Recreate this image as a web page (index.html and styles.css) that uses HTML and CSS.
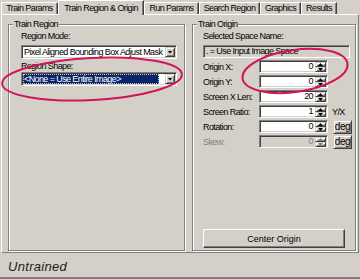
FILE: index.html
```html
<!DOCTYPE html>
<html lang="en">
<head>
    <meta charset="UTF-8">
    <title>Train Region &amp; Origin</title>
    <link rel="stylesheet" href="styles.css">
</head>
<body>
    <div class="dialog">
        <div class="tabs">
            <div class="tab tab-train">Train Params</div>
            <div class="tab tab-region active">Train Region &amp; Origin</div>
            <div class="tab tab-run">Run Params</div>
            <div class="tab tab-search">Search Region</div>
            <div class="tab tab-graphics">Graphics</div>
            <div class="tab tab-results">Results</div>
        </div>

        <div class="panel">
            <div class="group group-region">
                <div class="group-title">Train Region</div>
                <div class="group-body body-region">
                    <div class="label">Region Mode:</div>
                    <div class="combo sunken">
                        <div class="combo-text">Pixel Aligned Bounding Box Adjust Mask</div>
                        <div class="combo-btn raised"></div>
                    </div>
                    <div class="label label-gap">Region Shape:</div>
                    <div class="combo sunken">
                        <div class="combo-text"><span class="selected">&lt;None = Use Entire Image&gt;</span></div>
                        <div class="combo-btn raised"></div>
                    </div>
                </div>
            </div>

            <div class="group group-origin">
                <div class="group-title">Train Origin</div>
                <div class="group-body body-origin">
                    <div class="label">Selected Space Name:</div>
                    <div class="readonly sunken">. = Use Input Image Space</div>
                    <div class="rows">
                        <div class="row">
                            <span class="row-label">Origin X:</span>
                            <div class="field sunken"><span class="field-value">0</span><div class="spin"><span class="spin-up raised"></span><span class="spin-down raised"></span></div></div>
                        </div>
                        <div class="row">
                            <span class="row-label">Origin Y:</span>
                            <div class="field sunken"><span class="field-value">0</span><div class="spin"><span class="spin-up raised"></span><span class="spin-down raised"></span></div></div>
                        </div>
                        <div class="row">
                            <span class="row-label">Screen X Len:</span>
                            <div class="field sunken"><span class="field-value">20</span><div class="spin"><span class="spin-up raised"></span><span class="spin-down raised"></span></div></div>
                        </div>
                        <div class="row">
                            <span class="row-label">Screen Ratio:</span>
                            <div class="field sunken"><span class="field-value">1</span><div class="spin"><span class="spin-up raised"></span><span class="spin-down raised"></span></div></div>
                            <span class="unit">Y/X</span>
                        </div>
                        <div class="row">
                            <span class="row-label">Rotation:</span>
                            <div class="field sunken"><span class="field-value">0</span><div class="spin"><span class="spin-up raised"></span><span class="spin-down raised"></span></div></div>
                            <button class="deg-btn raised">deg</button>
                        </div>
                        <div class="row disabled">
                            <span class="row-label">Skew:</span>
                            <div class="field sunken"><span class="field-value">0</span><div class="spin"><span class="spin-up raised"></span><span class="spin-down raised"></span></div></div>
                            <button class="deg-btn raised">deg</button>
                        </div>
                    </div>
                    <button class="center-btn raised">Center Origin</button>
                </div>
            </div>
        </div>

        <div class="status">Untrained</div>

        <!-- red marker rings drawn over the dialog -->
        <svg class="marks" width="360" height="279" viewBox="0 0 360 279">
            <ellipse cx="92" cy="79" rx="90" ry="21" transform="rotate(-3 92 79)"/>
            <ellipse cx="295" cy="71" rx="53" ry="21" transform="rotate(-8 295 71)"/>
        </svg>
    </div>
</body>
</html>
```

FILE: styles.css
```css
body {
    margin: 0;
    background-color: #d4d0c8;
    font-family: "Liberation Sans", Arial, sans-serif;
    font-size: 9px;
    letter-spacing: -0.6px;
    color: #000;
}
.dialog {
    position: relative;
    width: 360px;
    height: 279px;
    padding-left: 1px;
    box-sizing: border-box;
    background: #d4d0c8;
    border-bottom: 2px solid #808080;
    overflow: hidden;
}

/* tab strip */
.tabs {
    display: flex;
    height: 14px;
    position: relative;
    z-index: 1;
}
.tab {
    box-sizing: border-box;
    height: 12px;
    margin-top: 2px;
    border-top: 1px solid #fff;
    border-left: 1px solid #fff;
    border-right: 1px solid #404040;
    box-shadow: inset -1px 0 #808080;
    line-height: 11px;
    text-align: center;
    white-space: nowrap;
}
.tab.active {
    height: 15px;
    margin-top: 0;
    padding-top: 2px;
    background: #d4d0c8;
}
.tab-train { width: 57px; }
.tab-region { width: 86px; }
.tab-run { width: 55px; }
.tab-search { width: 61px; }
.tab-graphics { width: 41px; }
.tab-results { width: 36px; }

/* tab page */
.panel {
    display: flex;
    box-sizing: border-box;
    width: 358px;
    height: 239px;
    padding: 9px 2px 1px 6px;
    border: 1px solid;
    border-color: #fff #808080 #808080 #fff;
}
.group {
    display: flex;
    flex-direction: column;
    box-sizing: border-box;
    height: 227px;
    border: 1px solid #808080;
    box-shadow: 1px 1px 0 #fff, inset 1px 1px 0 #fff;
}
.group-region { width: 177px; }
.group-origin { width: 164px; margin-left: 7px; }
.group-title {
    align-self: flex-start;
    margin: -6px 0 0 4px;
    padding: 0 1px;
    line-height: 11px;
    background: #d4d0c8;
}
.group-body {
    display: flex;
    flex-direction: column;
    flex: 1;
    padding-top: 1px;
}
.body-region { padding-left: 12px; }
.body-origin { padding-left: 10px; }
.label {
    line-height: 11px;
    margin-bottom: 3px;
}
.label-gap { margin-top: 2px; margin-bottom: 0; }

/* 3d borders */
.sunken {
    box-sizing: border-box;
    border: 1px solid;
    border-color: #808080 #fff #fff #808080;
    padding: 1px;
    box-shadow: inset 1px 1px #404040, inset -1px -1px #d4d0c8;
}
.raised {
    box-sizing: border-box;
    border: 1px solid;
    border-color: #d4d0c8 #404040 #404040 #d4d0c8;
    box-shadow: inset 1px 1px #fff, inset -1px -1px #808080;
    background: #d4d0c8;
}

/* combo boxes */
.combo {
    display: flex;
    width: 156px;
    height: 14px;
    background: #fff;
}
.combo-text {
    flex: 1;
    line-height: 10px;
    padding-left: 1px;
    white-space: nowrap;
    overflow: hidden;
}
.selected {
    display: block;
    width: 136px;
    height: 10px;
    margin-left: -1px;
    padding-left: 1px;
    box-sizing: border-box;
    background: #0a246a;
    color: #fff;
    outline: 1px dotted #c8c8c8;
    outline-offset: -1px;
}
.combo-btn {
    display: flex;
    align-items: center;
    justify-content: center;
    width: 10px;
}
.combo-btn::after {
    content: '';
    width: 5px;
    height: 3px;
    background: #000;
    clip-path: polygon(0 0, 100% 0, 50% 100%);
}

/* origin fields */
.readonly {
    width: 147px;
    height: 13px;
    line-height: 9px;
    padding-left: 2px;
    white-space: nowrap;
}
.rows {
    margin-top: 1px;
}
.row {
    display: flex;
    align-items: center;
    height: 15px;
}
.row-label {
    width: 56px;
    white-space: nowrap;
}
.field {
    display: flex;
    width: 69px;
    height: 13px;
    background: #fff;
}
.field-value {
    flex: 1;
    line-height: 9px;
    padding-right: 2px;
    text-align: right;
}
.spin {
    display: flex;
    flex-direction: column;
    width: 11px;
}
.spin span {
    display: flex;
    flex: 1;
    align-items: center;
    justify-content: center;
}
.spin span::after {
    content: '';
    width: 5px;
    height: 3px;
    background: #000;
}
.spin-up::after { clip-path: polygon(50% 0, 100% 100%, 0 100%); }
.spin-down::after { clip-path: polygon(0 0, 100% 0, 50% 100%); }
.unit {
    margin-left: 4px;
}
.deg-btn {
    width: 19px;
    height: 14px;
    margin-left: 5px;
    padding: 0;
    font-family: inherit;
    font-size: 10px;
    letter-spacing: -0.4px;
    line-height: 10px;
    color: #000;
}
.disabled .row-label,
.disabled .field-value {
    color: #808080;
}
.disabled .field {
    background: #d4d0c8;
}
.disabled .spin span::after {
    background: #808080;
}

.center-btn {
    width: 142px;
    height: 19px;
    margin-top: auto;
    margin-bottom: 2px;
    padding: 0;
    font: inherit;
    color: #000;
    border-color: #fff #404040 #404040 #fff;
    box-shadow: inset -1px -1px #808080;
}

/* status line */
.status {
    padding: 6px 0 0 7px;
    font-size: 13px;
    font-style: italic;
    letter-spacing: 0.3px;
    line-height: 15px;
    color: #202020;
}

.marks {
    position: absolute;
    left: 0;
    top: 0;
    pointer-events: none;
}
.marks ellipse {
    fill: none;
    stroke: #d2145a;
    stroke-width: 2;
}
```
